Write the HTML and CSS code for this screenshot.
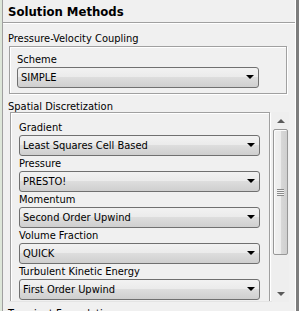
FILE: index.html
```html
<!DOCTYPE html>
<html>
<head>
<meta charset="utf-8">
<link rel="stylesheet" href="styles.css">
</head>
<body>
<div class="panel">
  <div class="title">Solution Methods</div>
  <div class="section-label">Pressure-Velocity Coupling</div>
  <div class="group group-top">
    <div class="field-label">Scheme</div>
    <div class="combo wide"><span>SIMPLE</span><i class="arrow"></i></div>
  </div>
  <div class="section-label second">Spatial Discretization</div>
  <div class="scroll-row">
    <div class="viewport">
      <div class="group group-inner">
        <div class="field-label">Gradient</div>
        <div class="combo"><span>Least Squares Cell Based</span><i class="arrow"></i></div>
        <div class="field-label">Pressure</div>
        <div class="combo"><span>PRESTO!</span><i class="arrow"></i></div>
        <div class="field-label">Momentum</div>
        <div class="combo"><span>Second Order Upwind</span><i class="arrow"></i></div>
        <div class="field-label">Volume Fraction</div>
        <div class="combo"><span>QUICK</span><i class="arrow"></i></div>
        <div class="field-label">Turbulent Kinetic Energy</div>
        <div class="combo"><span>First Order Upwind</span><i class="arrow"></i></div>
      </div>
    </div>
    <div class="scrollbar">
      <div class="sb-btn"><i class="sb-up"></i></div>
      <div class="sb-track">
        <div class="thumb"><div class="grip"></div></div>
      </div>
      <div class="sb-btn"><i class="sb-down"></i></div>
    </div>
  </div>
  <div class="section-label cut">Transient Formulation</div>
</div>
</body>
</html>
```
FILE: styles.css
```css
html, body {
  margin: 0;
  padding: 0;
}
body {
  width: 299px;
  height: 311px;
  overflow: hidden;
  background: #dde6d9;
  font-family: "DejaVu Sans Condensed", "DejaVu Sans", sans-serif;
  font-stretch: condensed;
  font-size: 11px;
  color: #000;
}
.panel {
  margin-left: 2px;
  height: 311px;
  box-sizing: border-box;
  background: #f0f0f0;
  border-left: 1px solid #a0a0a0;
  border-right: 3px solid #7c7c7c;
  box-shadow: inset -1px 0 0 #ffffff;
  display: flex;
  flex-direction: column;
  overflow: hidden;
}
.title {
  height: 22px;
  line-height: 23px;
  padding-left: 5px;
  font-weight: bold;
  font-size: 13px;
  border-bottom: 1px solid #a0a0a0;
  box-shadow: 0 1px 0 #ffffff;
  margin-right: 1px;
  flex: none;
}
.section-label {
  line-height: 14px;
  height: 14px;
  padding-left: 5px;
  margin-top: 9px;
  flex: none;
}
.section-label.second {
  margin-top: 5px;
  line-height: 15px;
  height: 13px;
}
.section-label.cut {
  margin-top: 5px;
}
.group {
  border: 1px solid #a0a0a0;
  box-shadow: inset 1px 1px 0 #ffffff, 1px 1px 0 #ffffff;
  flex: none;
}
.group-top {
  margin-left: 6px;
  width: 278px;
  padding: 6px 0 5px 7px;
  box-sizing: border-box;
  height: 48px;
}
.field-label {
  line-height: 14px;
  height: 14px;
}
.combo {
  position: relative;
  height: 21px;
  box-sizing: border-box;
  width: 241px;
  border: 1px solid #707070;
  border-radius: 3px;
  background: linear-gradient(#f2f2f2 0%, #ebebeb 45%, #dddddd 50%, #cfcfcf 100%);
  line-height: 19px;
  padding-left: 3px;
  margin-bottom: 1px;
}
.combo.wide {
  width: 242px;
}
.arrow {
  position: absolute;
  right: 4px;
  top: 7px;
  width: 0;
  height: 0;
  border-left: 4px solid transparent;
  border-right: 4px solid transparent;
  border-top: 4px solid #000;
}
.scroll-row {
  display: flex;
  height: 190px;
  flex: none;
  margin-left: 6px;
}
.viewport {
  width: 263px;
  overflow: hidden;
  flex: none;
  box-sizing: border-box;
  border-bottom: 1px solid #e4e4e4;
}
.group-inner {
  margin-left: 1px;
  width: 260px;
  box-sizing: border-box;
  padding: 8px 0 0 8px;
  height: 260px;
  border-bottom: none;
}
.scrollbar {
  width: 17px;
  display: flex;
  flex-direction: column;
  background: #eeeeee;
}
.sb-btn {
  height: 17px;
  display: flex;
  align-items: center;
  justify-content: center;
  flex: none;
}
.sb-up {
  width: 0;
  height: 0;
  border-left: 4px solid transparent;
  border-right: 4px solid transparent;
  border-bottom: 4px solid #5a5a5a;
}
.sb-down {
  width: 0;
  height: 0;
  border-left: 4px solid transparent;
  border-right: 4px solid transparent;
  border-top: 4px solid #5a5a5a;
}
.sb-track {
  flex: 1;
  padding-left: 1px;
}
.thumb {
  height: 126px;
  width: 15px;
  box-sizing: border-box;
  border: 1px solid #979797;
  border-radius: 2px;
  background: linear-gradient(90deg, #f1f1f1 0%, #ececec 50%, #d8d8d8 51%, #cfcfcf 100%);
  box-shadow: inset 1px 1px 0 #fbfbfb;
  display: flex;
  align-items: center;
  justify-content: center;
}
.grip {
  width: 7px;
  height: 7px;
  background: repeating-linear-gradient(#8a8a8a 0, #8a8a8a 1px, #f4f4f4 1px, #f4f4f4 2px);
}
```
